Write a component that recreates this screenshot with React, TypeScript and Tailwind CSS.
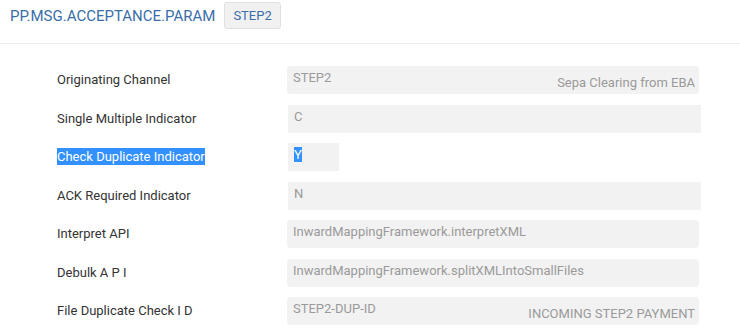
import React from 'react';

type Row = {
    label: string;
    value: string;
    extra?: string;
    rounded?: boolean;
    short?: boolean;
    selected?: boolean;
};

const rows: Row[] = [
    { label: 'Originating Channel', value: 'STEP2', extra: 'Sepa Clearing from EBA', rounded: true },
    { label: 'Single Multiple Indicator', value: 'C' },
    { label: 'Check Duplicate Indicator', value: 'Y', short: true, selected: true },
    { label: 'ACK Required Indicator', value: 'N' },
    { label: 'Interpret API', value: 'InwardMappingFramework.interpretXML', rounded: true },
    { label: 'Debulk A P I', value: 'InwardMappingFramework.splitXMLIntoSmallFiles', rounded: true },
    { label: 'File Duplicate Check I D', value: 'STEP2-DUP-ID', extra: 'INCOMING STEP2 PAYMENT', rounded: true },
];

export default function App() {
    return (
        <div className="w-[740px] h-[330px] bg-white overflow-hidden font-['Roboto',sans-serif]">
            <div className="h-[44px] flex items-start gap-[9px] pl-[10px] pt-[2px] border-b border-[#eeeeee]">
                <h1 className="text-[15px] leading-[28px] text-[#3a6ea8] font-normal">PP.MSG.ACCEPTANCE.PARAM</h1>
                <span className="h-[27px] px-[8px] flex items-center text-[13px] text-[#3a6ea8] bg-[#f1f1f1] border border-[#e0e0e0] rounded-[3px]">
                    STEP2
                </span>
            </div>

            <div className="flex flex-col gap-[10.5px] pt-[22px]">
                {rows.map((row, i) => (
                    <div key={i} className="flex items-center h-[28px]">
                        <div className="w-[287px] pl-[57px] text-[13px] text-[#333333]">
                            {row.selected ? (
                                <span className="bg-[#3390ff] text-white py-[1px]">{row.label}</span>
                            ) : (
                                row.label
                            )}
                        </div>
                        <div
                            className={
                                'h-full flex justify-between bg-[#f2f2f2] text-[13px] text-[#9a9a9a] ' +
                                (row.short ? 'w-[51px] ml-[1px] ' : row.rounded ? 'w-[412px] ' : 'w-[413px] ml-[1px] ') +
                                (row.rounded ? 'rounded-[4px]' : '')
                            }
                        >
                            <span className="pl-[6px] pt-[3px] leading-[17px] self-start">
                                {row.selected ? <span className="bg-[#3390ff] text-white">{row.value}</span> : row.value}
                            </span>
                            {row.extra && <span className="pr-[4px] pb-[3px] leading-[16px] self-end">{row.extra}</span>}
                        </div>
                    </div>
                ))}
            </div>
        </div>
    );
}
